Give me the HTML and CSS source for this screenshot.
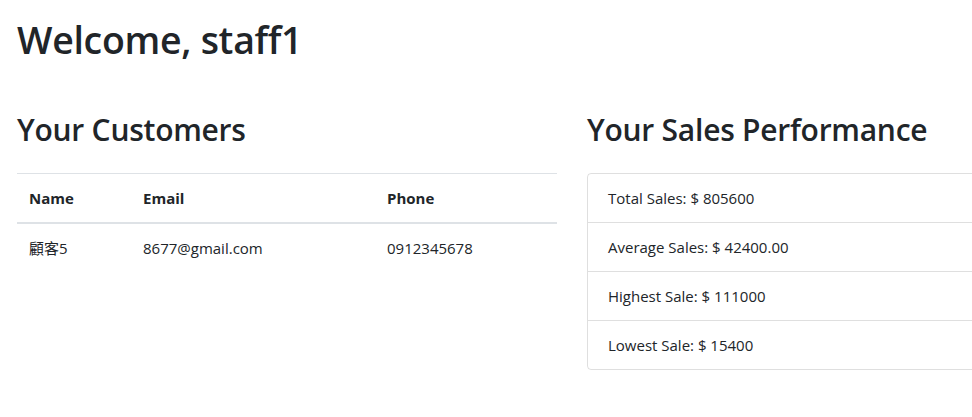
FILE: index.html
```html
<!DOCTYPE html>
<html lang="zh-Hant">
<head>
<meta charset="utf-8">
<title>Dashboard</title>
<link rel="stylesheet" href="styles.css">
</head>
<body>
<div class="container">
  <h1 class="title">Welcome, staff1</h1>
  <div class="row">
    <div class="col">
      <h2 class="section-title">Your Customers</h2>
      <table class="table">
        <thead>
          <tr><th class="c-name">Name</th><th class="c-email">Email</th><th>Phone</th></tr>
        </thead>
        <tbody>
          <tr><td>顧客5</td><td>8677@gmail.com</td><td>0912345678</td></tr>
        </tbody>
      </table>
    </div>
    <div class="col">
      <h2 class="section-title">Your Sales Performance</h2>
      <ul class="list-group">
        <li class="list-group-item">Total Sales: $ 805600</li>
        <li class="list-group-item">Average Sales: $ 42400.00</li>
        <li class="list-group-item">Highest Sale: $ 111000</li>
        <li class="list-group-item">Lowest Sale: $ 15400</li>
      </ul>
    </div>
  </div>
</div>
</body>
</html>
```
FILE: styles.css
```css
html, body {
  margin: 0;
  padding: 0;
  overflow: hidden;
  background: #fff;
}
body {
  font-family: "Open Sans", "Noto Sans CJK TC", sans-serif;
  font-size: 16px;
  line-height: 24px;
  color: #212529;
}
.container {
  width: 1140px;
  margin-left: 2px;
  padding: 16px 15px 0;
  box-sizing: border-box;
}
.title {
  margin: 0;
  font-size: 37.5px;
  font-weight: 600;
  line-height: 48px;
  letter-spacing: -0.3px;
}
.row {
  display: flex;
  gap: 30px;
  margin-top: 47px;
}
.col {
  flex: 0 0 540px;
  width: 540px;
}
.section-title {
  margin: 0 0 24px;
  font-size: 30px;
  font-weight: 600;
  line-height: 38px;
  letter-spacing: -0.25px;
}
.table {
  width: 100%;
  border-collapse: collapse;
  table-layout: fixed;
}
.table th, .table td {
  padding: 12px;
  text-align: left;
  vertical-align: top;
  border-top: 1px solid #dee2e6;
}
.table th {
  font-weight: 700;
  font-size: 15px;
  border-bottom: 2px solid #dee2e6;
}
.table td {
  font-size: 15px;
}
.c-name { width: 90px; }
.c-email { width: 220px; }
.list-group {
  list-style: none;
  margin: 0;
  padding: 0;
  border: 1px solid rgba(0,0,0,.125);
  border-radius: 4px;
}
.list-group-item {
  padding: 12px 20px;
  font-size: 15px;
  border-top: 1px solid rgba(0,0,0,.125);
}
.list-group-item:first-child {
  border-top: 0;
}
```
